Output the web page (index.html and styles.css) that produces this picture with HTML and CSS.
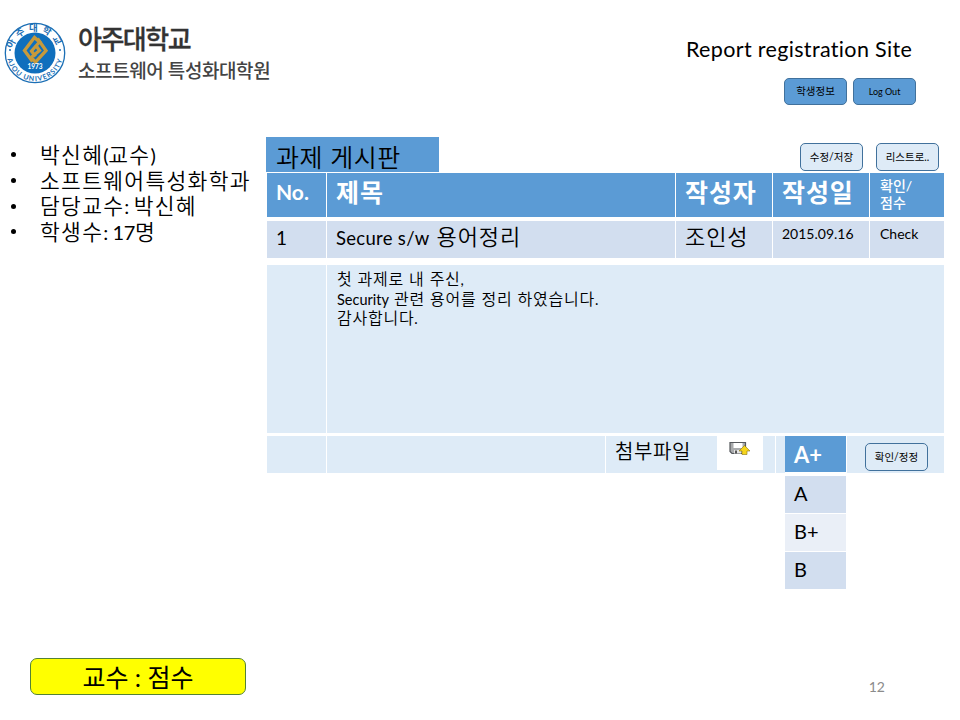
FILE: index.html
```html
<!DOCTYPE html>
<html lang="ko">
<head>
<meta charset="utf-8">
<title>Report registration Site</title>
<link rel="stylesheet" href="styles.css">
</head>
<body>
<div class="slide">
  <header class="top">
    <div class="brand">
      <svg class="seal" viewBox="0 0 62 62" width="62" height="62">
        <defs>
          <path id="arcTop" d="M8.500 34a22.600 22.600 0 1 1 45 0"/>
          <path id="arcBottom" d="M3.800 23a28.300 28.300 0 1 0 54.400 0"/>
        </defs>
        <circle cx="31" cy="31" r="29.700" fill="#fff" stroke="#1c6fb5" stroke-width="1.300"/>
        <circle cx="31" cy="31" r="20.500" fill="#0f6fbd"/>
        <text class="seal-ko"><textPath href="#arcTop" startOffset="50%" text-anchor="middle">아주대학교</textPath></text>
        <text class="seal-en"><textPath href="#arcBottom" startOffset="50%" text-anchor="middle">AJOU UNIVERSITY</textPath></text>
        <circle cx="6" cy="28" r="1" fill="#1c6fb5"/><circle cx="56" cy="28" r="1" fill="#1c6fb5"/>
        <g fill="none" stroke="#c79a3c" stroke-width="3.300">
          <path d="M28.500 39.500L20.500 28.500L30.500 15.500L35.500 20L27.500 29L31.500 34.500"/>
          <path d="M33.500 16.500L42 28.500L31.500 40L27 35.500L35.500 28.500L31.500 23"/>
        </g>
        <text class="seal-year" x="31" y="47" text-anchor="middle">1973</text>
      </svg>
      <div class="brand-text">
        <div class="univ"><span>아주대학교</span></div>
        <div class="dept"><span>소프트웨어 특성화대학원</span></div>
      </div>
    </div>
    <div class="site">
      <h1><span>Report registration Site</span></h1>
      <div class="actions">
        <button class="btn solid">학생정보</button>
        <button class="btn solid en">Log Out</button>
      </div>
    </div>
  </header>

  <div class="content">
    <ul class="profile">
      <li><span>박신혜<span class="num">(</span>교수<span class="num">)</span></span></li>
      <li><span>소프트웨어특성화학과</span></li>
      <li><span>담당교수<span class="num">: </span>박신혜</span></li>
      <li><span>학생수<span class="num">: 17</span>명</span></li>
    </ul>
    <main class="board">
      <div class="board-head">
        <h2><span>과제 게시판</span></h2>
        <div class="tools">
          <button class="btn">수정/저장</button>
          <button class="btn">리스트로..</button>
        </div>
      </div>
      <div class="row head">
        <div class="no">No.</div>
        <div class="big"><span>제목</span></div>
        <div class="big"><span>작성자</span></div>
        <div class="big"><span>작성일</span></div>
        <div class="two">확인/<br>점수</div>
      </div>
      <div class="row item">
        <div class="latin">1</div>
        <div class="subject"><span class="latin">Secure s/w</span> <span>용어정리</span></div>
        <div class="author"><span>조인성</span></div>
        <div class="small"><span>2015.09.16</span></div>
        <div class="small check"><span>Check</span></div>
      </div>
      <div class="row body">
        <div></div>
        <div class="message"><p><span>첫 과제로 내 주신<span class="en">,</span></span></p><p><span><span class="en">Security</span> 관련 용어를 정리 하였습니다<span class="en">.</span></span></p><p><span>감사합니다<span class="en">.</span></span></p></div>
      </div>
      <div class="row foot">
        <div></div>
        <div></div>
        <div class="attach"><span>첨부파일</span>
          <span class="file"><svg viewBox="0 0 22 16" width="22" height="16">
            <path d="M1 1.500H16.500V12.500H3L1 10.500Z" fill="#a9abad" stroke="#55585c" stroke-width="1.200"/>
            <path d="M4.500 2H13.500V7H4.500Z" fill="#fff"/>
            <path d="M5 9H12V12.500H5Z" fill="#e6e6e6"/><path d="M6 9.500H8V12.500H6Z" fill="#555"/>
            <path d="M15.500 4.500L21 10H18V13.500H13V10H10Z" fill="#f6d51c" stroke="#8a7412" stroke-width=".6"/>
          </svg></span>
        </div>
        <div></div>
        <ul class="grades"><li class="on">A+</li><li>A</li><li>B+</li><li>B</li></ul>
        <div class="confirm"><button class="btn">확인/정정</button></div>
      </div>
    </main>
  </div>

  <footer class="bottom">
    <div class="note"><span>교수 : 점수</span></div>
    <div class="page">12</div>
  </footer>
</div>
</body>
</html>
```
FILE: styles.css
```css
* { box-sizing: border-box; margin: 0; padding: 0; }
body { width: 960px; height: 720px; overflow: hidden; background: #fff; color: #000; font-family: Lato, "Noto Sans CJK KR", sans-serif; font-variant-ligatures: none; }
span { white-space: nowrap; }
.slide { width: 960px; height: 720px; display: flex; flex-direction: column; }
.top { height: 137px; display: flex; justify-content: space-between; }
.brand { display: flex; padding: 22px 0 0 4px; }
.brand-text { padding-left: 12px; color: #333; }
.univ { font-size: 26px; line-height: 34px; font-weight: 500; letter-spacing: -1.500px; -webkit-text-stroke: .3px #333; }
.dept { font-size: 19px; line-height: 29px; letter-spacing: -.4px; color: #444; font-weight: 500; }
.seal-ko { font-size: 9.500px; font-weight: 700; fill: #1c6fb5; letter-spacing: 3.500px; }
.seal-en { font-size: 7px; font-weight: 700; fill: #1c6fb5; letter-spacing: 1px; }
.seal-year { font-size: 6.500px; font-weight: 700; fill: #fff; }
.site { width: 276px; padding-top: 34px; }
.site h1 { font-size: 21.500px; line-height: 30px; font-weight: 400; padding-left: 2px; letter-spacing: .34px; }
.actions { display: flex; gap: 6px; padding: 14px 0 0 100px; }
.btn { width: 63px; height: 28px; border: 1px solid #41719c; border-radius: 5px; background: #deebf7; font-family: inherit; font-size: 10.500px; line-height: 24px; color: #000; text-align: center; white-space: nowrap; }
.btn.solid { background: #5b9bd5; height: 27px; font-size: 10.500px; line-height: 23px; }
.btn.solid.en { font-size: 9px; }
.content { display: flex; height: 521px; }
.profile { width: 266px; list-style: none; padding: 5px 0 0 11px; font-size: 21.500px; font-weight: 350; letter-spacing: 1.300px; }
.profile li { height: 25.700px; line-height: 26px; display: flex; align-items: center; }
.profile li::before { content: ""; width: 5px; height: 5px; border-radius: 50%; background: #000; margin-right: 24px; }
.num { font-size: 20px; letter-spacing: -.4px; font-weight: 400; }
.board { width: 678px; }
.board-head { display: flex; justify-content: space-between; height: 36px; }
.board-head h2 { width: 173px; height: 35px; background: #5b9bd5; font-size: 25px; line-height: 40px; font-weight: 350; letter-spacing: .5px; padding-left: 10px; }
.tools { display: flex; gap: 13px; padding: 6px 5px 0 0; }
.row { display: grid; grid-template-columns: 59px 348px 96px 96px 74px; column-gap: 1px; padding-left: 1px; }
.row > div { padding-left: 9px; background: #deebf7; }
.row.head { height: 44px; margin-bottom: 4px; color: #fff; }
.row.head > div { background: #5b9bd5; }
.row > .no { font-size: 21px; line-height: 37px; font-weight: 700; }
.big { font-size: 25px; line-height: 39px; font-weight: 700; letter-spacing: .9px; }
.row > .two { font-size: 14px; line-height: 17px; padding: 4px 0 0 10px; font-weight: 500; }
.row.item { height: 37px; margin-bottom: 7px; }
.row.item > div { background: #d2deef; }
.latin { font-size: 19px; line-height: 33px; }
.subject, .author { font-size: 22px; line-height: 32px; font-weight: 350; letter-spacing: .9px; }
.subject .latin { font-size: 18.500px; font-weight: 400; letter-spacing: .3px; }
.small { font-size: 14px; line-height: 26px; }
.row > .check { padding-left: 10px; }
.row.body { height: 168px; grid-template-columns: 59px 617px; margin-bottom: 3px; }
.row > .message { padding: 4px 0 0 10px; font-size: 16px; line-height: 19.500px; font-weight: 350; letter-spacing: .75px; }
.message p { height: 19.500px; }
.message .en { font-size: 14.500px; letter-spacing: 0; font-weight: 400; }
.row.foot { height: 37px; grid-template-rows: 37px; grid-template-columns: 59px 278px 169px 8px 61px 97px; }
.attach { display: flex; justify-content: space-between; font-size: 20px; line-height: 30px; font-weight: 350; letter-spacing: .6px; padding-right: 12px; }
.file { width: 46px; height: 34px; background: #fff; padding: 5px 0 0 12px; line-height: 0; }
.grades { list-style: none; font-size: 20px; }
.grades li { height: 37px; margin-bottom: 1px; padding-left: 9px; line-height: 35px; background: #d2deef; }
.grades li:nth-child(3) { background: #eaeff7; }
.grades .on { height: 36px; margin-bottom: 4px; background: #5b9bd5; color: #fff; font-weight: 700; font-size: 22px; line-height: 38px; }
.row .confirm { padding: 7px 0 0 18px; }
.bottom { display: flex; justify-content: space-between; }
.note { margin-left: 30px; width: 216px; height: 37px; border: 1px solid #548235; border-radius: 7px; background: #ff0; text-align: center; font-size: 25px; line-height: 36px; }
.page { padding: 20px 75px 0 0; font-size: 14px; line-height: 18px; color: #8b8b8b; }
```
